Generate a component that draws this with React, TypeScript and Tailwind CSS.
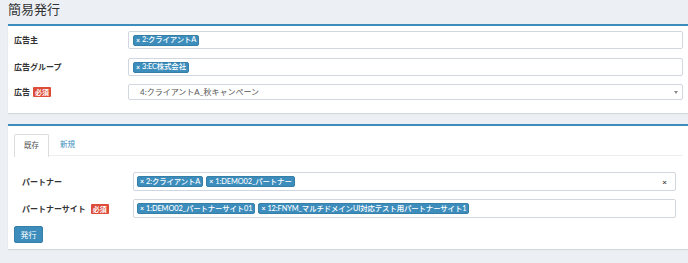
import React from "react";

const FONT = { fontFamily: 'Lato, "Noto Sans CJK JP", "Noto Sans", sans-serif' };

function Tag({ text }: { text: string }) {
  return (
    <span className="inline-flex items-center h-[11px] px-[2px] mr-[3px] rounded-[2px] bg-[#3c8dbc] border border-[#367fa9] text-white text-[7.4px] font-medium leading-none whitespace-nowrap tracking-[-0.1px]">
      <span className="mr-[2px] text-[7px] font-bold">×</span>
      {text}
    </span>
  );
}

function Required() {
  return (
    <span className="ml-[3px] inline-flex items-center h-[10px] px-[2px] rounded-[1px] bg-[#dd4b39] text-white text-[7px] font-bold leading-none">
      必須
    </span>
  );
}

export default function App() {
  return (
    <div className="w-[688px] h-[263px] overflow-hidden bg-[#ecf0f5] text-[#333]" style={FONT}>
      <div className="h-[24px] pl-[8px] pt-[1px] text-[13px] leading-[16px] text-[#333]">簡易発行</div>

      {/* Box 1 */}
      <div className="ml-[8px] bg-white border-t-2 border-[#3c8dbc] shadow-[0_1px_1px_rgba(0,0,0,0.1)] pl-[6px] pr-[5px] pt-[5px] pb-[13px]">
        <div className="flex items-center h-[18px] mb-[9px]">
          <div className="w-[114px] text-[8px] font-bold">広告主</div>
          <div className="flex-1 h-[18px] border border-[#d2d6de] rounded-[2px] flex items-center pl-[4px]">
            <Tag text="2:クライアントA" />
          </div>
        </div>
        <div className="flex items-center h-[18px] mb-[8px]">
          <div className="w-[114px] text-[8px] font-bold">広告グループ</div>
          <div className="flex-1 h-[18px] border border-[#d2d6de] rounded-[2px] flex items-center pl-[4px]">
            <Tag text="3:EC株式会社" />
          </div>
        </div>
        <div className="flex items-center h-[16px]">
          <div className="w-[114px] text-[8px] font-bold flex items-center">
            広告<Required />
          </div>
          <div className="flex-1 h-[16px] border border-[#d2d6de] rounded-[2px] flex items-center pl-[11px] pr-[4px]">
            <span className="flex-1 text-[8px] text-[#555]">4:クライアントA_秋キャンペーン</span>
            <span className="w-0 h-0 border-l-[2.5px] border-r-[2.5px] border-t-[3px] border-l-transparent border-r-transparent border-t-[#888]" />
          </div>
        </div>
      </div>

      {/* Box 2 */}
      <div className="mt-[11px] ml-[8px] bg-white border-t-2 border-[#3c8dbc] shadow-[0_1px_1px_rgba(0,0,0,0.1)] pl-[6px] pr-[5px] pt-[8px] pb-[6px]">
        <div className="flex h-[22px] border-b border-[#eee]">
          <div className="h-[23px] px-[9px] flex items-center border border-b-0 border-[#ddd] rounded-t-[2px] bg-white text-[7.5px] text-[#555]">
            既存
          </div>
          <div className="px-[11px] flex items-center text-[7.5px] text-[#3c8dbc]">新規</div>
        </div>
        <div className="pl-[8px] pr-[7px] pt-[16px]">
          <div className="flex items-center h-[19px] mb-[8px]">
            <div className="w-[111px] text-[8px] font-bold">パートナー</div>
            <div className="flex-1 h-[19px] border border-[#d2d6de] rounded-[2px] flex items-center pl-[3px] pr-[8px]">
              <Tag text="2:クライアントA" />
              <Tag text="1:DEMO02_パートナー" />
              <span className="ml-auto text-[8px] font-bold text-[#444] leading-none">×</span>
            </div>
          </div>
          <div className="flex items-center h-[19px]">
            <div className="w-[111px] text-[8px] font-bold flex items-center">
              パートナーサイト<span className="ml-[2px]"><Required /></span>
            </div>
            <div className="flex-1 h-[19px] border border-[#d2d6de] rounded-[2px] flex items-center pl-[3px]">
              <Tag text="1:DEMO02_パートナーサイト01" />
              <Tag text="12:FNYM_マルチドメインUI対応テスト用パートナーサイト1" />
            </div>
          </div>
        </div>
        <div className="mt-[8px]">
          <button className="h-[17px] w-[29px] rounded-[2px] bg-[#3c8dbc] border border-[#367fa9] text-white text-[8px] leading-none flex items-center justify-center">
            発行
          </button>
        </div>
      </div>
    </div>
  );
}
